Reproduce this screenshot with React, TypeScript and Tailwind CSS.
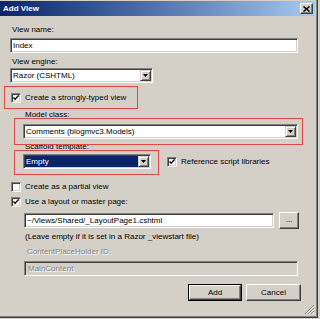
import React from "react";

function Field({ className = "", children, bg = "bg-white" }: { className?: string; children?: React.ReactNode; bg?: string }) {
  return (
    <div className={`border border-t-[#808080] border-l-[#808080] border-b-white border-r-white ${className}`}>
      <div className={`w-full h-full ${bg} shadow-[inset_1px_1px_0_#404040,inset_-1px_-1px_0_#d4d0c8] flex items-center pl-[2px] overflow-hidden whitespace-nowrap`}>
        {children}
      </div>
    </div>
  );
}

function Arrow() {
  return (
    <div className="w-[11px] h-full bg-[#d4d0c8] border border-t-[#d4d0c8] border-l-[#d4d0c8] border-b-[#404040] border-r-[#404040] shadow-[inset_1px_1px_0_#ffffff,inset_-1px_-1px_0_#808080] flex items-center justify-center shrink-0">
      <svg width="5" height="3" viewBox="0 0 5 3">
        <path d="M0 0h5L2.5 3z" fill="#000" />
      </svg>
    </div>
  );
}

function Combo({ className = "", text, selected = false }: { className?: string; text: string; selected?: boolean }) {
  return (
    <div className={`border border-t-[#808080] border-l-[#808080] border-b-white border-r-white ${className}`}>
      <div className="w-full h-full bg-white shadow-[inset_1px_1px_0_#404040,inset_-1px_-1px_0_#d4d0c8] flex items-stretch p-[1px] overflow-hidden">
        <div className={`flex-1 flex items-center pl-[1px] whitespace-nowrap ${selected ? "bg-[#0a246a] text-white" : ""}`}>{text}</div>
        <Arrow />
      </div>
    </div>
  );
}

function Check({ checked }: { checked: boolean }) {
  return (
    <div className="w-[10px] h-[10px] border border-t-[#808080] border-l-[#808080] border-b-white border-r-white shrink-0">
      <div className="w-full h-full bg-white shadow-[inset_1px_1px_0_#404040,inset_-1px_-1px_0_#d4d0c8] flex items-center justify-center">
        {checked && (
          <svg width="6" height="6" viewBox="0 0 7 7">
            <path d="M0.5 3l2 2 4-4.5" stroke="#000" strokeWidth="1.6" fill="none" />
          </svg>
        )}
      </div>
    </div>
  );
}

function CheckRow({ className = "", checked, label }: { className?: string; checked: boolean; label: string }) {
  return (
    <div className={`flex items-center gap-[4px] h-[10px] ${className}`}>
      <Check checked={checked} />
      <span className="whitespace-nowrap">{label}</span>
    </div>
  );
}

function Btn({ className = "", children, def = false }: { className?: string; children: React.ReactNode; def?: boolean }) {
  return (
    <div className={`${def ? "border border-black" : ""} ${className}`}>
      <div className="w-full h-full bg-[#d4d0c8] border border-t-white border-l-white border-b-[#404040] border-r-[#404040] shadow-[inset_-1px_-1px_0_#808080] flex items-center justify-center">
        {children}
      </div>
    </div>
  );
}

export default function App() {
  return (
    <div className="w-[320px] h-[319px] bg-[#d4d0c8] overflow-hidden font-['Liberation_Sans',Arial,sans-serif] text-[8px] leading-[10px] text-black">
      <div className="relative w-[318px] h-[318px] border-r border-b border-[#404040] shadow-[inset_-1px_-1px_0_#808080] flex flex-col">
        <div className="mt-[1px] mr-[2px] h-[15px] bg-linear-to-r from-[#0a246a] to-[#a6caf0] flex items-center justify-between pl-[3px] pr-[2px]">
          <span className="text-white font-bold text-[8px]">Add View</span>
          <Btn className="w-[13px] h-[11px]">
            <svg width="7" height="6" viewBox="0 0 7 6">
              <path d="M0.5 0.5l6 5M6.5 0.5l-6 5" stroke="#000" strokeWidth="1.5" />
            </svg>
          </Btn>
        </div>

        <div className="pl-[12px] mt-[9px] h-[10px]">View name:</div>
        <Field className="ml-[10px] mt-[3px] w-[288px] h-[15px]">Index</Field>

        <div className="pl-[12px] mt-[4px] h-[10px]">View engine:</div>
        <Combo className="ml-[10px] mt-[1px] w-[143px] h-[15px]" text="Razor (CSHTML)" />

        <CheckRow className="ml-[11px] mt-[10px]" checked label="Create a strongly-typed view" />

        <div className="pl-[25px] mt-[7px] h-[10px]">Model class:</div>
        <Combo className="ml-[23px] mt-[4px] w-[275px] h-[15px]" text="Comments (blogmvc3.Models)" />

        <div className="pl-[25px] mt-[3px] h-[10px]">Scaffold template:</div>
        <div className="flex items-center mt-[2px]">
          <Combo className="ml-[23px] w-[128px] h-[15px]" text="Empty" selected />
          <CheckRow className="ml-[16px]" checked label="Reference script libraries" />
        </div>

        <CheckRow className="ml-[11px] mt-[13px]" checked={false} label="Create as a partial view" />
        <CheckRow className="ml-[11px] mt-[5px]" checked label="Use a layout or master page:" />

        <div className="ml-[24px] mt-[5px] flex items-center gap-[5px]">
          <Field className="w-[250px] h-[15px]">~/Views/Shared/_LayoutPage1.cshtml</Field>
          <Btn className="w-[20px] h-[17px]">
            <span className="leading-none -mt-[2px]">...</span>
          </Btn>
        </div>

        <div className="pl-[25px] mt-[3px] h-[10px] whitespace-nowrap">(Leave empty if it is set in a Razor _viewstart file)</div>
        <div className="pl-[27px] mt-[5px] h-[10px] text-[#808080] [text-shadow:1px_1px_0_#ffffff]">ContentPlaceHolder ID:</div>
        <Field className="ml-[24px] mt-[4px] w-[274px] h-[15px]" bg="bg-[#d4d0c8]">
          <span className="text-[#808080] [text-shadow:1px_1px_0_#ffffff] pl-[1px]">MainContent</span>
        </Field>

        <div className="mt-[8px] flex justify-end gap-[4px] mr-[16px]">
          <Btn def className="w-[54px] h-[17px]">Add</Btn>
          <Btn className="w-[55px] h-[17px]">Cancel</Btn>
        </div>

        <svg className="absolute right-[2px] bottom-[2px]" width="11" height="11" viewBox="0 0 11 11">
          <path d="M10 1L1 10M10 4L4 10M10 7L7 10" stroke="#808080" strokeWidth="1" />
          <path d="M10 2L2 10M10 5L5 10M10 8L8 10" stroke="#ffffff" strokeWidth="1" />
        </svg>

        <div className="absolute left-[4px] top-[86px] w-[134px] h-[23px] border border-[#e04848]" />
        <div className="absolute left-[14px] top-[118px] w-[289px] h-[27px] border border-[#e04848]" />
        <div className="absolute left-[14px] top-[150px] w-[145px] h-[25px] border border-[#e04848]" />
      </div>
    </div>
  );
}
